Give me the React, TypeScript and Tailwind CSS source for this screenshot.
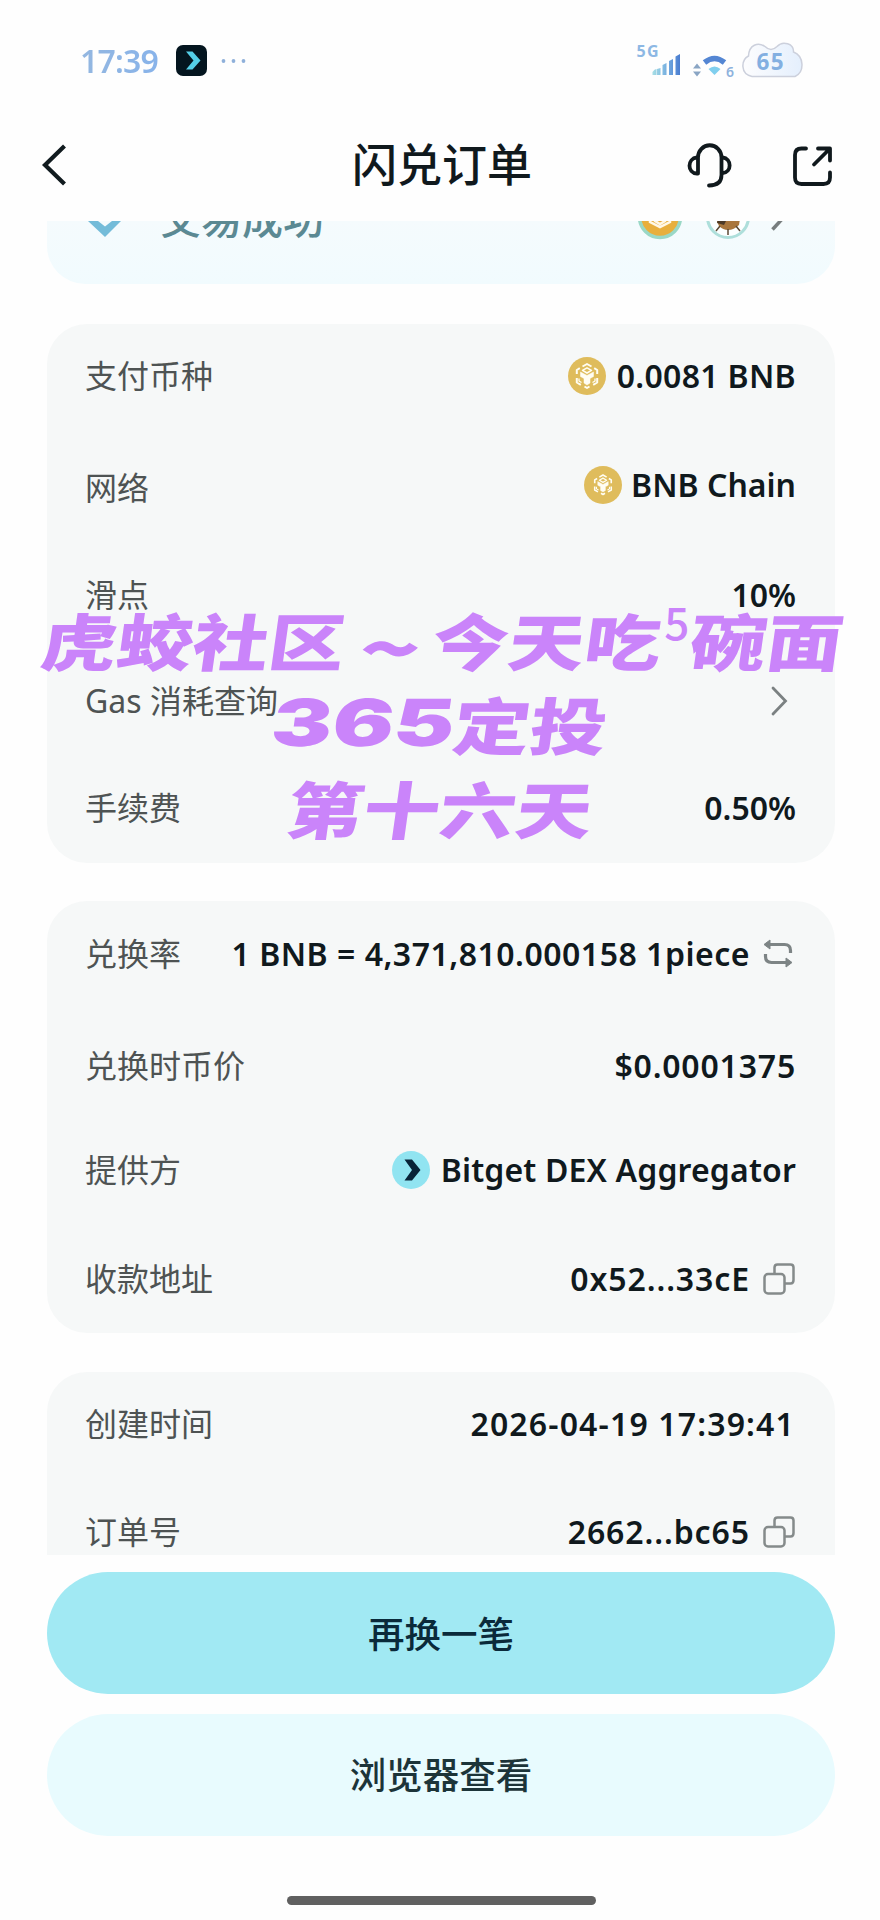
import type { ReactNode } from "react";

const SANS = "font-['Noto_Sans','Noto_Sans_CJK_SC',sans-serif]";

function StatusBar() {
  return (
    <div className="flex h-[98px] shrink-0 items-start justify-between pl-[80px] pr-[76px] pt-[40px]">
      <div className="flex h-[41px] items-center">
        <span className="w-[96px] bg-gradient-to-r from-[#94b7e0] to-[#85b2ec] bg-clip-text text-[32px] font-semibold leading-[41px] tracking-[-0.8px] text-transparent">
          17:39
        </span>
        <svg width="31" height="31" viewBox="0 0 31 31">
          <rect width="31" height="31" rx="7" fill="#04151f" />
          <path d="M10 6.500h6.500l8 9-8 9H10l7.500-9z" fill="#54cfe8" />
        </svg>
        <svg className="ml-[14px]" width="26" height="6" viewBox="0 0 26 6">
          <circle cx="2.500" cy="3" r="1.900" fill="#8fb0da" />
          <circle cx="12.500" cy="3" r="1.900" fill="#8fb0da" />
          <circle cx="22.500" cy="3" r="1.900" fill="#8fb0da" />
        </svg>
      </div>
      <svg width="168" height="40" viewBox="635 38 168 40">
        <defs>
          <linearGradient id="bars" gradientUnits="userSpaceOnUse" x1="652" x2="680" y1="0" y2="0">
            <stop offset="0" stopColor="#a5dde5" />
            <stop offset="0.5" stopColor="#76aee0" />
            <stop offset="1" stopColor="#4779cf" />
          </linearGradient>
          <linearGradient id="cloud" x1="0" x2="1">
            <stop offset="0" stopColor="#fdfdfe" />
            <stop offset="1" stopColor="#e4effd" />
          </linearGradient>
        </defs>
        <text x="635.500" y="54.500" fontSize="16" fontWeight="700" fill="#8db8e4" fontFamily="Noto Sans" textLength="22">5G</text>
        <path
          d="M651.500 73v-3q2-3 4-3v6zM656 73v-6l3.500-1v7zM661.500 73V63l4-2v12zM668 73V59l4-2v16zM674.500 73V54.500l4.500-2.500V73z"
          fill="url(#bars)"
        />
        <path d="M696 61.500l4 5h-8zM696 74.500l4-5h-8z" fill="#8aa5c4" />
        <path d="M703.500 60.500Q713.500 52.500 723.500 60.500" fill="none" stroke="#5486d3" strokeWidth="5.500" />
        <path d="M707.500 67Q713.500 62 719.500 67L713.500 73z" fill="#80cfee" />
        <text x="725" y="74.500" fontSize="14" fontWeight="600" fill="#8eb2dd" fontFamily="Noto Sans">6</text>
        <path
          d="M751 74.500C739 72 740 58 747.500 54C748 43 757 39.500 764 44.500Q770 50.500 776 44.500C782 38 793 42 792.500 50C803 54 804 70 794 74.500Z"
          fill="url(#cloud)"
          stroke="#ccd0dc"
          strokeWidth="1.500"
        />
        <text x="755.500" y="67.500" fontSize="22.500" fontWeight="700" fill="#83afe1" fontFamily="Noto Sans" textLength="27">65</text>
      </svg>
    </div>
  );
}

function Header() {
  return (
    <header className="flex h-[123px] shrink-0 items-center justify-between pb-[4px] pl-[38px] pr-[43px] pt-[14px]">
      <svg className="mr-[127px]" width="34" height="46" viewBox="38 142 34 46" fill="none" stroke="#111b1f" strokeWidth="4.200">
        <path d="M64.500 146L45 165l19.500 19" />
      </svg>
      <h1 className="w-[182px] whitespace-nowrap text-[45px] font-medium leading-[60px] text-[#10191d]">闪兑订单</h1>
      <svg width="150" height="46" viewBox="686 142 150 46" fill="none" stroke="#10191d" strokeWidth="3.800" strokeLinecap="round" strokeLinejoin="round">
        <path d="M697 173.500V157.500a11.500 12 0 0 1 23.500 0v17.500q0 10.500-12.500 10.500" />
        <path d="M696 157.500c-10 1-10 15.500 0 16M721.500 157.500c9.500 1 9.500 15 0 15.500" />
        <path d="M805 148.500h-4.500q-6.500 0-6.500 6.500v22.500q0 6.500 6.500 6.500h22q6.500 0 6.500-6.500v-5" />
        <path d="M817 148.500h12v12M828 149.500l-15 15" />
      </svg>
    </header>
  );
}

function SuccessCard() {
  return (
    <div className="ml-[47px] mr-[45px] flex h-[63px] shrink-0 items-start rounded-b-[38px] bg-gradient-to-b from-[#f5fbfd] to-[#f1fbfe]">
      <svg className="ml-[39px] shrink-0" width="38" height="20" viewBox="86 221 38 20">
        <path d="M88 221H98l7 5.500 7-5.500h9L105 237z" fill="#74bcd9" />
      </svg>
      <div className="ml-[36px] mt-[-33px] h-[60px] w-[171px] shrink-0 whitespace-nowrap text-[41px] font-medium leading-[60px] text-[#5b8993]">
        交易成功
      </div>
      <svg className="ml-[304px] shrink-0" width="154" height="20" viewBox="635 221 154 20">
        <circle cx="660" cy="217" r="20.500" fill="#e8af3d" stroke="#9ad8c6" strokeWidth="3.500" />
        <path d="M650 219v3l10 5 10-5v-3M655 216v5l5 3 5-3v-5" fill="none" stroke="#fff8e8" strokeWidth="2.500" />
        <circle cx="728" cy="217" r="20.500" fill="#fcffff" stroke="#aedfdb" strokeWidth="3" />
        <path d="M716 219h24l-1 6q-5 5-11 5-5 0-9-4z" fill="#a9763c" />
        <path d="M718 219h9l-3 6-7-2zM736 219l3 5" fill="#4c3926" />
        <path d="M720 226l-4 5M728 229v6M736 226l4 5" stroke="#5c4934" strokeWidth="1.500" />
        <path d="M784 217l-11.500 12.500" stroke="#777d7e" strokeWidth="3.500" />
      </svg>
    </div>
  );
}

function Card({ className, children }: { className: string; children: ReactNode }) {
  return <section className={`ml-[47px] mr-[45px] shrink-0 rounded-[40px] bg-[#f6f8f8] pl-[38px] pr-[39px] ${className}`}>{children}</section>;
}

function Row({ label, className, children }: { label: string; className: string; children: ReactNode }) {
  return (
    <div className={`flex h-16 items-center justify-between whitespace-nowrap ${className}`}>
      <span className="text-[32px] leading-[48px] text-[#4e5353]">{label}</span>
      <div className="flex items-center text-[32px] font-semibold leading-[48px] text-[#10191d]">{children}</div>
    </div>
  );
}

function BnbIcon({ small }: { small?: boolean }) {
  return (
    <svg width="38" height="38" viewBox="0 0 38 38">
      <circle cx="19" cy="19" r="19" fill="#dfbc5c" />
      <g transform={small ? "translate(3.6 3.4) scale(.81)" : undefined} fill="none" stroke="#fffdf3" strokeWidth="2" strokeLinejoin="round">
        <path d="M14.500 9.500L19 7l4.500 2.500M8.800 17v-4l3-1.800M29.200 17v-4l-3-1.800M8.800 21v4.500l4 2.300M29.200 21v4.500l-4 2.300M16.500 29.500l2.500 1.500 2.500-1.500" />
        <path d="M19 10.800l4.500 2.600-4.500 2.600-4.500-2.600z" strokeWidth="1.500" />
        <path d="M12.500 15l6.500 3.500 6.500-3.500v4.500l-3.500 2v4.500l-3 2-3-2v-4.500l-3.500-2z" fill="#fffdf3" strokeWidth="0.500" />
        <path d="M11 21.500v2.500l2.500 1.500M27 21.500v2.500l-2.500 1.500" strokeWidth="1.300" />
      </g>
    </svg>
  );
}

function CopyIcon() {
  return (
    <svg className="ml-[13px] mr-[1px]" width="32" height="32" viewBox="0 0 32 32" fill="none" stroke="#858b8b" strokeWidth="2.500">
      <rect x="1.500" y="11" width="20" height="19.500" rx="3.500" />
      <path d="M11.500 10.500V4.500q0-3 3-3H27.500q3 0 3 3V17q0 3.500-3 3.500H22" />
    </svg>
  );
}

function SwapIcon() {
  return (
    <svg className="ml-[13px] mr-[3px]" width="30" height="30" viewBox="0 0 30 30" fill="none" stroke="#7d8485" strokeWidth="3.200">
      <path d="M6 5.500h15.500q6 0 6 6V14M2.500 15v2.500q0 6 6 6H24" />
      <path d="M1 5.500l6-4.500v9zM29 23.500L23 19v9z" fill="#7d8485" stroke="#7d8485" strokeWidth="1" strokeLinejoin="round" />
    </svg>
  );
}

function Overlay() {
  return (
    <div className="pointer-events-none absolute left-0 top-[597px] w-full font-['Noto_Sans_CJK_SC',sans-serif] text-[62px] font-black leading-[84px] text-[#ca84fa]">
      <div className="flex h-[84px] origin-center -skew-x-[8deg] whitespace-nowrap pl-[42px]">
        <span className="w-[311px] origin-left scale-x-[1.225]">虎蛟社区</span>
        <span className="w-[80px] origin-left translate-x-[8px] translate-y-[6px] scale-x-[1.400] text-[72px] leading-[84px]">~</span>
        <span className="w-[230px] origin-left scale-x-[1.230]">今天吃</span>
        <span className="mt-[-18px] w-[28px] skew-x-[8deg] text-[44px] font-medium leading-[84px]">5</span>
        <span className="origin-left scale-x-[1.230]">碗面</span>
      </div>
      <div className="flex h-[84px] origin-center -skew-x-[8deg] whitespace-nowrap pl-[272px]">
        <span className="w-[182px] origin-left scale-x-[1.400] font-['Inter',sans-serif] text-[65px]">365</span>
        <span className="origin-left scale-x-[1.240]">定投</span>
      </div>
      <div className="flex h-[84px] origin-center -skew-x-[8deg] whitespace-nowrap pl-[288px]">
        <span className="origin-left scale-x-[1.230]">第十六天</span>
      </div>
    </div>
  );
}

export default function App() {
  return (
    <div className={`relative flex h-[1920px] w-[880px] flex-col overflow-hidden bg-[#fefefe] ${SANS}`}>
      <StatusBar />
      <Header />
      <main className="flex h-[1334px] shrink-0 flex-col overflow-hidden">
        <SuccessCard />
        <Card className="mt-[40px] h-[539px] pt-[20px]">
          <Row label="支付币种" className="">
            <BnbIcon />
            <span className="ml-[11px] tracking-[0.300px]">0.0081 BNB</span>
          </Row>
          <Row label="网络" className="mt-[48px]">
            <div className="mt-[-6px] flex items-center">
              <BnbIcon small />
              <span className="ml-[9px]">BNB Chain</span>
            </div>
          </Row>
          <Row label="滑点" className="mt-[43px]">10%</Row>
          <Row label="Gas 消耗查询" className="mt-[42px]">
            <svg className="mr-[8px]" width="17" height="30" viewBox="0 0 17 30" fill="none" stroke="#7b8182" strokeWidth="2.800" strokeLinecap="round">
              <path d="M2 2l12.500 13L2 28" />
            </svg>
          </Row>
          <Row label="手续费" className="mt-[43px]">0.50%</Row>
        </Card>
        <Card className="mt-[38px] h-[432px] pt-[21px]">
          <Row label="兑换率" className="">
            <span className="tracking-[0.500px]">1 BNB = 4,371,810.000158 1piece</span>
            <SwapIcon />
          </Row>
          <Row label="兑换时币价" className="mt-[48px]">
            <span className="tracking-[0.800px]">$0.0001375</span>
          </Row>
          <Row label="提供方" className="mt-[40px]">
            <svg width="38" height="38" viewBox="0 0 38 38">
              <circle cx="19" cy="19" r="19" fill="#91e4f1" />
              <path d="M12.500 8.500H20L28.500 19 20 29.500h-7.500L20 19z" fill="#082338" />
            </svg>
            <span className="ml-[11px] tracking-[0.150px]">Bitget DEX Aggregator</span>
          </Row>
          <Row label="收款地址" className="mt-[45px]">
            <span className="tracking-[0.900px]">0x52...33cE</span>
            <CopyIcon />
          </Row>
        </Card>
        <Card className="mt-[39px] h-[260px] pt-[20px]">
          <Row label="创建时间" className="">
            <span className="mr-[1px] tracking-[1.150px]">2026-04-19 17:39:41</span>
          </Row>
          <Row label="订单号" className="mt-[44px]">
            <span className="tracking-[0.900px]">2662...bc65</span>
            <CopyIcon />
          </Row>
        </Card>
      </main>
      <footer className="flex flex-col pl-[47px] pr-[45px] pt-[17px]">
        <button className="h-[122px] rounded-full bg-[#a1e9f3] pt-[2px] text-[36.500px] font-medium leading-[56px] text-[#0a2a3a]">再换一笔</button>
        <button className="mt-[20px] h-[122px] rounded-full bg-[#e8fbfe] text-[36.500px] font-medium leading-[56px] text-[#1c3439]">浏览器查看</button>
        <div className="mt-[60px] h-[9px] w-[309px] self-center rounded-full bg-[#606060]" />
      </footer>
      <Overlay />
    </div>
  );
}
